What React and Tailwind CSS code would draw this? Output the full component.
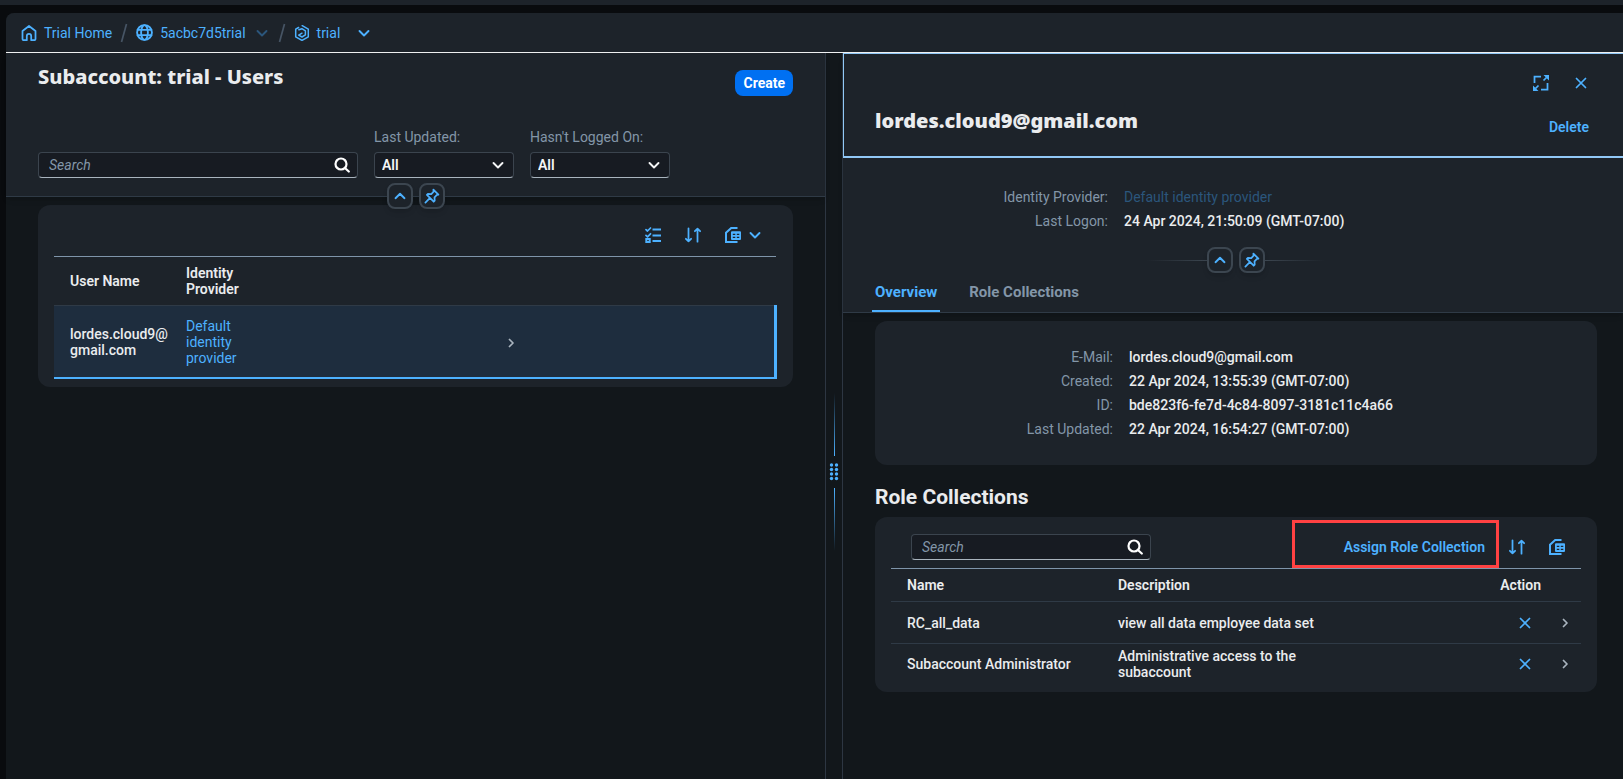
const svgBase = {
  viewBox: '0 0 16 16',
  fill: 'none',
  stroke: 'currentColor',
  strokeWidth: 1.75,
  strokeLinecap: 'round',
  strokeLinejoin: 'round',
  'aria-hidden': true,
};

function HomeIcon() {
  return (
    <svg {...svgBase} className="size-4">
      <path d="M1.500 6 8 1l6.500 5V14a1.200 1.200 0 0 1-1.200 1.200H10.200V11a2.200 2.200 0 0 0-4.400 0v4.200H2.700A1.200 1.200 0 0 1 1.500 14Z" />
    </svg>
  );
}

function GlobeIcon() {
  return (
    <svg {...svgBase} className="size-[17px]">
      <circle cx="8" cy="8" r="7" />
      <ellipse cx="8" cy="8" rx="3.200" ry="7" />
      <path d="M1.500 5.500h13M1.500 10.500h13" />
    </svg>
  );
}

function SubaccountIcon() {
  return (
    <svg {...svgBase} strokeWidth={1.5} className="size-4">
      <path d="M4.600 2.500 1.700 4.200v7.600L8 15.400l6.300-3.600V4.200L8.200.700" />
      <path d="M4.900 4.800 7.900 3.700l3.500 2.100v4.100L8 12 4.700 10.100 8 8.200" />
    </svg>
  );
}

function Chevron({ className = 'size-4', d = 'm3.500 6 4.500 4.500L12.500 6' }) {
  return (
    <svg {...svgBase} strokeWidth={1.9} className={className}>
      <path d={d} />
    </svg>
  );
}

function ChevronUp() {
  return <Chevron d="m3.500 10.200 4.500-4.400 4.500 4.400" />;
}

function NavArrow() {
  return (
    <svg {...svgBase} className="inline-block size-4 text-[#a9b4be]">
      <path d="m6.500 4.500 3.500 3.500-3.500 3.500" />
    </svg>
  );
}

function PinIcon() {
  return (
    <svg {...svgBase} className="size-4">
      <path d="m9.400 1.600 5 5-1.500.300-2.400 2.400.200 3.400-1 1L2.900 6.900l1-1 3.400.200 2.300-2.400ZM5.800 10.200 1.400 14.600" />
    </svg>
  );
}

function SearchIcon() {
  return (
    <svg {...svgBase} strokeWidth={2.2} className="size-4">
      <circle cx="7" cy="7" r="5.500" />
      <path d="m11.200 11.200 3.600 3.300" />
    </svg>
  );
}

function ChecklistIcon() {
  return (
    <svg {...svgBase} className="size-4">
      <path d="m1 2.600 1.500 1.400L5.500 1M1 8.400l1.500 1.400 3-3" />
      <path strokeLinecap="butt" strokeWidth="2" d="M7.500 2.500H16M7.500 8.500H16M7.500 14H16" />
      <path strokeLinejoin="miter" strokeWidth="2" d="M1.300 12h3.400v3H1.300Z" />
    </svg>
  );
}

function SortIcon() {
  return (
    <svg {...svgBase} className="size-4">
      <path d="M3.500 1.300v13M.900 11.800l2.600 2.600 2.600-2.600M12.500 14.700v-13M9.900 4.200l2.600-2.600 2.600 2.600" />
    </svg>
  );
}

function SpreadsheetIcon() {
  return (
    <svg {...svgBase} className="size-4">
      <path strokeWidth="2" strokeLinecap="butt" strokeLinejoin="miter" d="M12.500 1H6.200L1 5.800V15H12.500" />
      <path
        fill="currentColor"
        stroke="none"
        fillRule="evenodd"
        d="M7 4.300h8a1 1 0 0 1 1 1V12a1 1 0 0 1-1 1H7a1 1 0 0 1-1-1V5.300a1 1 0 0 1 1-1Zm.800 2.400v1.300h2.500V6.700Zm4 0v1.300h2.500V6.700ZM7.800 9.700v1.300h2.500V9.700Zm4 0v1.300h2.500V9.700Z"
      />
    </svg>
  );
}

function ExpandIcon() {
  return (
    <svg {...svgBase} strokeLinecap="butt" strokeLinejoin="miter" className="size-4">
      <path d="M8 1.500H1.500V8M8 14.500h6.500V8M10.500 5.500l3-3M5.500 10.500l-3 3" />
      <path fill="currentColor" stroke="none" d="M10.500 0H16v5.500ZM0 10.500V16h5.500Z" />
    </svg>
  );
}

function CloseIcon() {
  return (
    <svg {...svgBase} className="size-4">
      <path d="m3.500 3.500 9 9M12.500 3.500l-9 9" />
    </svg>
  );
}

function Slash() {
  return (
    <svg viewBox="0 0 8 20" fill="none" stroke="#475565" strokeWidth="1.700" className="h-5 w-2" aria-hidden="true">
      <path d="M6.500 1 1.500 19" />
    </svg>
  );
}

function IconButton({ label, children }) {
  return (
    <button type="button" aria-label={label} className="flex h-[26px] w-8 items-center justify-center text-[#4db1ff]">
      {children}
    </button>
  );
}

function HeaderToggles() {
  const cls =
    'flex size-[26px] items-center justify-center rounded-lg border-2 border-[#3c4650] bg-[#1d232a] text-[#4db1ff] shadow-md';
  return (
    <>
      <button type="button" aria-label="Collapse header" className={cls}>
        <ChevronUp />
      </button>
      <button type="button" aria-label="Pin header" className={cls}>
        <PinIcon />
      </button>
    </>
  );
}

function SearchField({ className }) {
  return (
    <div
      role="search"
      className={`flex h-[26px] items-center rounded border border-[#3b444e] border-b-[#a9b4be] bg-[#171b22] ${className}`}
    >
      <input
        type="text"
        aria-label="Search"
        placeholder="Search"
        className="min-w-0 flex-1 bg-transparent pl-2.5 text-sm italic text-[#eaecee] outline-none placeholder:text-[#8396a8]"
      />
      <button type="button" aria-label="Start search" className="flex w-[30px] items-center justify-center text-white">
        <SearchIcon />
      </button>
    </div>
  );
}

function FilterSelect({ id, label }) {
  return (
    <div className="flex w-[140px] flex-col gap-[5px]">
      <label htmlFor={id} className="text-sm whitespace-nowrap text-[#8396a8]">
        {label}
      </label>
      <div className="relative">
        <select
          id={id}
          className="h-[26px] w-full appearance-none rounded border border-[#3b444e] border-b-[#a9b4be] bg-[#171b22] pr-8 pl-[7px] text-sm font-semibold text-[#f5f6f7] outline-none"
        >
          <option>All</option>
        </select>
        <span className="pointer-events-none absolute inset-y-0 right-2 flex items-center text-[#f5f6f7]">
          <Chevron />
        </span>
      </div>
    </div>
  );
}

function Breadcrumb() {
  return (
    <nav
      aria-label="Breadcrumb"
      className="flex h-10 items-center rounded-tl-lg border-b border-[#f0f1f2] bg-[#1d232a] pl-[15px] text-sm text-[#4db1ff]"
    >
      <a href="#home" className="flex items-center gap-[7px]">
        <HomeIcon />
        Trial Home
      </a>
      <span className="ml-2">
        <Slash />
      </span>
      <a href="#account" className="ml-2 flex items-center gap-[7px]">
        <GlobeIcon />
        5acbc7d5trial
      </a>
      <button type="button" aria-label="Switch account" className="ml-2 text-[#2b567c]">
        <Chevron />
      </button>
      <span className="ml-2">
        <Slash />
      </span>
      <a href="#subaccount" className="ml-2 flex items-center gap-[7px]">
        <SubaccountIcon />
        trial
      </a>
      <button type="button" aria-label="Switch subaccount" className="ml-4">
        <Chevron />
      </button>
    </nav>
  );
}

function UsersPane() {
  return (
    <section className="border-r border-[#2d3642]">
      <header className="relative border-b border-[#2f3a46] bg-[#1d232a] px-8 pt-[10px] pb-[18px] shadow-md">
        <div className="flex items-start justify-between">
          <h1 className="font-['Noto_Sans',sans-serif] text-xl leading-7 font-extrabold text-[#eaecee]">
            Subaccount: trial - Users
          </h1>
          <button
            type="button"
            className="mt-[7px] h-[26px] rounded-lg bg-[#0070f2] px-2 text-sm leading-[26px] font-bold text-white"
          >
            Create
          </button>
        </div>
        <div className="mt-[31px] flex items-end gap-4">
          <SearchField className="w-80" />
          <FilterSelect id="last-updated" label="Last Updated:" />
          <FilterSelect id="not-logged-on" label="Hasn't Logged On:" />
        </div>
        <div className="absolute inset-x-0 -bottom-[13px] z-10 flex justify-center gap-1.5">
          <HeaderToggles />
        </div>
      </header>

      <div className="mx-8 mt-2 rounded-xl bg-[#1d232a] px-4 pb-2">
        <div className="flex h-[51px] items-center justify-end gap-2 pt-[9px] pr-2">
          <IconButton label="Select columns">
            <ChecklistIcon />
          </IconButton>
          <IconButton label="Sort">
            <SortIcon />
          </IconButton>
          <button
            type="button"
            aria-label="Export to spreadsheet"
            className="flex h-[26px] items-center gap-1.5 pr-1.5 pl-2 text-[#4db1ff]"
          >
            <SpreadsheetIcon />
            <Chevron />
          </button>
        </div>
        <table className="w-full table-fixed border-t border-[#7f95aa] text-left text-sm leading-4 text-[#eaecee]">
          <colgroup>
            <col className="w-[116px]" />
            <col className="w-[100px]" />
            <col className="w-[249px]" />
            <col />
          </colgroup>
          <thead>
            <tr className="h-[49px] border-b border-[#2f3a46]">
              <th className="pl-4 font-semibold">User Name</th>
              <th className="pr-4 pl-4 font-semibold">Identity Provider</th>
              <th aria-label="Details" />
              <th aria-hidden="true" />
            </tr>
          </thead>
          <tbody>
            <tr className="h-[72px] border-b-2 border-[#4db1ff] bg-[#1e2d3e]">
              <td className="pt-0.5 pl-4 font-medium">
                lordes.cloud9@
                <wbr />
                gmail.com
              </td>
              <td className="pt-0.5 pr-6 pl-4 text-[#4db1ff]">
                <a href="#identity-provider">Default identity provider</a>
              </td>
              <td className="pt-0.5 text-right">
                <NavArrow />
              </td>
              <td className="border-r-3 border-[#4db1ff]" />
            </tr>
          </tbody>
        </table>
      </div>
    </section>
  );
}

function Splitter() {
  return (
    <div role="separator" aria-orientation="vertical" className="flex flex-col items-center pt-[340px]">
      <span className="h-[63px] w-px bg-linear-to-t from-[#4db1ff] to-transparent" />
      <svg viewBox="0 0 10 18" fill="#4db1ff" className="my-[7px] h-[18px] w-2.5" aria-hidden="true">
        {[2, 6.5, 11, 15.5].map((y) => (
          <g key={y}>
            <circle cx="2.500" cy={y} r="1.700" />
            <circle cx="7.500" cy={y} r="1.700" />
          </g>
        ))}
      </svg>
      <span className="h-[63px] w-px bg-linear-to-b from-[#4db1ff] to-transparent" />
    </div>
  );
}

const details = [
  ['E-Mail:', 'lordes.cloud9@gmail.com'],
  ['Created:', '22 Apr 2024, 13:55:39 (GMT-07:00)'],
  ['ID:', 'bde823f6-fe7d-4c84-8097-3181c11c4a66'],
  ['Last Updated:', '22 Apr 2024, 16:54:27 (GMT-07:00)'],
];

const roles = [
  { name: 'RC_all_data', description: 'view all data employee data set', height: 'h-[42px]' },
  { name: 'Subaccount Administrator', description: 'Administrative access to the subaccount', height: 'h-10' },
];

function UserPane() {
  return (
    <section className="border-l border-[#2d3642]">
      <div className="border-b border-[#2f3a46] bg-[#1d232a] shadow-md">
        <header className="border-t border-b-2 border-l border-[#91c8f6] pt-4 pr-[26px] pb-4 pl-[31px]">
          <div className="flex justify-end gap-2">
            <IconButton label="Enter full screen">
              <ExpandIcon />
            </IconButton>
            <IconButton label="Close">
              <CloseIcon />
            </IconButton>
          </div>
          <div className="mt-[11px] flex items-start justify-between">
            <h2 className="font-['Noto_Sans',sans-serif] text-xl leading-7 font-black text-[#eaecee]">
              lordes.cloud9@gmail.com
            </h2>
            <button type="button" className="mt-[7px] h-[26px] px-2 text-sm font-semibold text-[#4db1ff]">
              Delete
            </button>
          </div>
        </header>

        <div className="pt-[27px] pr-[26px] pl-8">
          <dl className="grid grid-cols-[233fr_473fr] gap-x-4 text-sm leading-6">
            <dt className="text-right text-[#8396a8]">Identity Provider:</dt>
            <dd className="text-[#2b567c]">Default identity provider</dd>
            <dt className="text-right text-[#8396a8]">Last Logon:</dt>
            <dd className="font-medium text-[#eaecee]">24 Apr 2024, 21:50:09 (GMT-07:00)</dd>
          </dl>
          <div className="mt-3.5 flex items-center justify-center">
            <span className="h-px w-[60px] bg-linear-to-l from-[#3c4650] to-transparent" />
            <div className="flex gap-1.5">
              <HeaderToggles />
            </div>
            <span className="h-px w-[60px] bg-linear-to-r from-[#3c4650] to-transparent" />
          </div>
          <div role="tablist" className="-ml-[3px] flex gap-[26px] pt-0.5 text-[15px] leading-[35px] font-bold">
            <button type="button" role="tab" aria-selected="true" className="border-b-2 border-[#4db1ff] px-[3px] text-[#4db1ff]">
              Overview
            </button>
            <button type="button" role="tab" aria-selected="false" className="border-b-2 border-transparent px-[3px] text-[#8396a8]">
              Role Collections
            </button>
          </div>
        </div>
      </div>

      <div className="pt-2 pr-[26px] pl-8">
        <dl className="grid grid-cols-[222fr_452fr] gap-x-4 rounded-xl bg-[#1d232a] px-4 py-6 text-sm leading-6">
          {details.map(([label, value]) => (
            <div key={label} className="contents">
              <dt className="text-right text-[#8396a8]">{label}</dt>
              <dd className="font-medium text-[#eaecee]">{value}</dd>
            </div>
          ))}
        </dl>

        <h3 className="mt-[18px] mb-1.5 text-[21px] leading-7 font-bold text-[#eaecee]">Role Collections</h3>

        <div className="rounded-xl bg-[#1d232a] px-4 pb-2">
          <div className="flex items-center gap-2 pt-[17px] pr-2 pb-2 pl-5">
            <SearchField className="w-60" />
            <div className="relative ml-auto">
              <button type="button" className="h-[26px] px-2 text-sm font-semibold text-[#4db1ff]">
                Assign Role Collection
              </button>
              <span className="pointer-events-none absolute -top-3.5 -right-1.5 -bottom-2 -left-11 border-3 border-[#ff4142]" />
            </div>
            <IconButton label="Sort">
              <SortIcon />
            </IconButton>
            <IconButton label="Export to spreadsheet">
              <SpreadsheetIcon />
            </IconButton>
          </div>
          <table className="w-full table-fixed border-t border-[#7f95aa] text-left text-sm leading-4 text-[#eaecee]">
            <colgroup>
              <col className="w-[211px]" />
              <col />
              <col className="w-24" />
              <col className="w-8" />
            </colgroup>
            <thead>
              <tr className="h-[33px] border-b border-[#2f3a46]">
                <th className="pl-4 font-semibold">Name</th>
                <th className="pl-4 font-semibold">Description</th>
                <th className="pr-2 text-right font-semibold">Action</th>
                <th aria-label="Details" />
              </tr>
            </thead>
            <tbody>
              {roles.map((r) => (
                <tr key={r.name} className={`border-b border-[#2f3a46] last:border-b-0 ${r.height}`}>
                  <td className="pl-4 font-medium whitespace-nowrap">{r.name}</td>
                  <td className="pl-4 font-medium">
                    <div className="max-w-52">{r.description}</div>
                  </td>
                  <td className="pr-2">
                    <div className="flex justify-end">
                      <IconButton label={`Remove ${r.name}`}>
                        <CloseIcon />
                      </IconButton>
                    </div>
                  </td>
                  <td>
                    <div className="flex justify-center">
                      <NavArrow />
                    </div>
                  </td>
                </tr>
              ))}
            </tbody>
          </table>
        </div>
      </div>
    </section>
  );
}

export default function App() {
  return (
    <div className="flex min-h-screen flex-col bg-[#090b0e] font-[Roboto,sans-serif]">
      <div className="h-[5px] bg-[#1d232a]" />
      <div className="mt-2 ml-1.5 flex flex-1 flex-col rounded-tl-lg bg-[#12171b]">
        <Breadcrumb />
        <main className="grid flex-1 grid-cols-[820fr_16px_781fr]">
          <UsersPane />
          <Splitter />
          <UserPane />
        </main>
      </div>
    </div>
  );
}
